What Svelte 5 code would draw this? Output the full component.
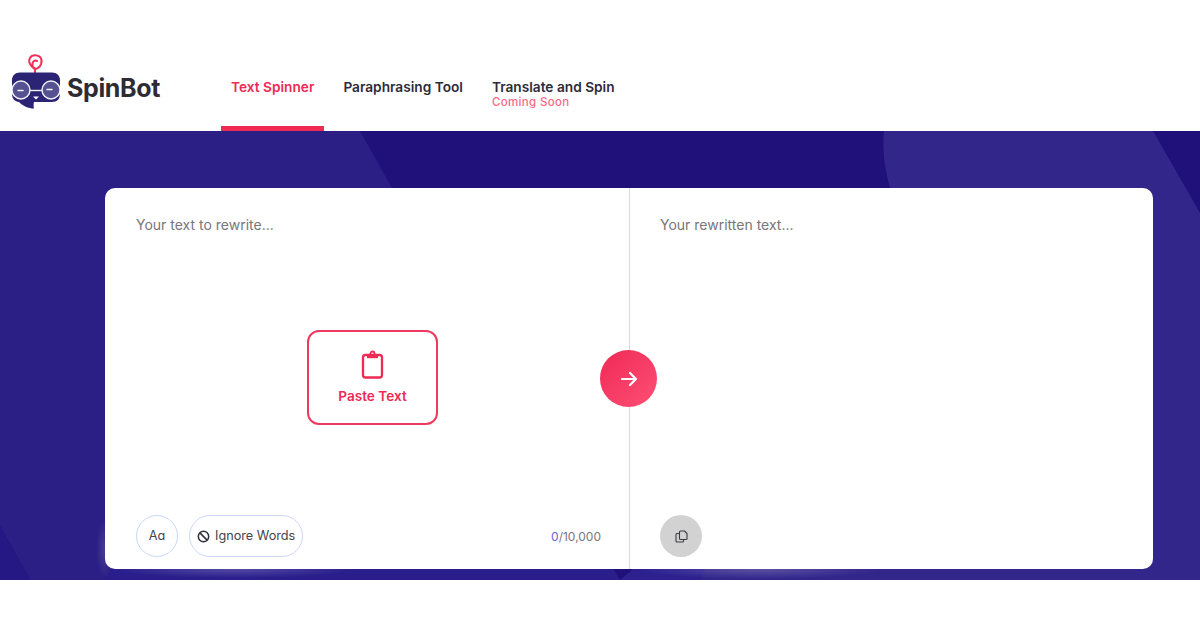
<script>
  const tabs = [
    { label: 'Text Spinner', active: true },
    { label: 'Paraphrasing Tool' },
    { label: 'Translate and Spin', note: 'Coming Soon' }
  ];
</script>

<header class="topbar">
  <a class="logo" href="#top">
    <svg class="logo-mark" width="48" height="55" viewBox="0 0 48 55" fill="none">
      <path d="M23 22 V15.5 C18 12 16 7 18 4 C20 0.5 26 0.5 28.5 3.5 C31 7 29 13 25 14.5 C22 15.5 20 12.5 20.5 9.5 C21 7 23 6 25 7" stroke="#f0325a" stroke-width="2" stroke-linecap="round"/>
      <path d="M8 18.5 H40 C45 18.5 48 22 48 26 V40 C48 45 45 48 40 48 H22 C21.5 50 21.5 52.5 22 54.5 C16 54.5 11 52 7 48 C3 47.5 0 45 0 40 V26 C0 22 3 18.5 8 18.5 Z" fill="#2b2374"/>
      <circle cx="9" cy="36" r="9" fill="#565191" stroke="#f2f2f8" stroke-width="1.4"/>
      <circle cx="39" cy="36" r="9" fill="#565191" stroke="#f2f2f8" stroke-width="1.4"/>
      <path d="M18 36.5 H30" stroke="#f2f2f8" stroke-width="1.4"/>
      <path d="M6 36.5 H11 M35 35.5 H40" stroke="#f2f2f8" stroke-width="1.5" stroke-linecap="round"/>
      <path d="M21 42.5 H27 L24 45.5 Z" fill="#fff"/>
    </svg>
    <span class="logo-text">SpinBot</span>
  </a>
  <nav class="tabs">
    {#each tabs as tab}
      <a class="tab" class:active={tab.active} href="#top">
        <span class="tab-label">{tab.label}</span>
        {#if tab.note}<span class="tab-note">{tab.note}</span>{/if}
      </a>
    {/each}
  </nav>
</header>

<main class="hero">
  <svg class="hero-bg" width="1200" height="449" viewBox="0 0 1200 449" preserveAspectRatio="none">
    <defs>
      <radialGradient id="glow">
        <stop offset="0" stop-color="#fff" stop-opacity="0.2"/>
        <stop offset="1" stop-color="#fff" stop-opacity="0"/>
      </radialGradient>
    </defs>
    <rect width="1200" height="449" fill="#201079"/>
    <path d="M0 0 H360 L392 57 L105 449 H30 L0 395 Z" fill="#2b1e85"/>
    <path d="M0 395 L30 449 H0 Z" fill="#251884"/>
    <path d="M105 449 L392 57 L620 449 Z" fill="#2a1e8c"/>
    <path d="M620 449 L840 260 L1200 200 V449 Z" fill="#2d2190"/>
    <path d="M884 0 H1153 L1200 82 V449 H700 L890 57 C885 38 882 20 884 0 Z" fill="#32268b"/>
    <ellipse cx="105" cy="418" rx="9" ry="30" fill="url(#glow)" opacity="0.7"/>
    <ellipse cx="235" cy="438" rx="120" ry="9" fill="url(#glow)"/>
    <ellipse cx="760" cy="438" rx="120" ry="10" fill="url(#glow)"/>
  </svg>

  <section class="card">
    <div class="pane pane-left">
      <p class="placeholder">Your text to rewrite...</p>
      <div class="pane-middle">
        <button class="paste">
          <svg width="23" height="29" viewBox="0 0 23 29" fill="none" stroke="#ee2a55" stroke-width="2.3" stroke-linejoin="round">
            <rect x="2" y="5" width="19" height="22.5" rx="2.5"/>
            <circle cx="11.5" cy="3.5" r="2" stroke-width="1.8"/>
            <path d="M6 6.5 H17" stroke-width="3.4"/>
          </svg>
          <span>Paste Text</span>
        </button>
      </div>
      <div class="pane-foot">
        <button class="chip round">Aɑ</button>
        <button class="chip">
          <svg class="chip-icon" width="13" height="13" viewBox="0 0 13 13" fill="none" stroke="#2f2f3a" stroke-width="1.5">
            <circle cx="6.5" cy="6.5" r="5.2"/>
            <path d="M2.9 2.9 L10.1 10.1"/>
          </svg>
          Ignore Words
        </button>
        <span class="count"><b>0</b>/10,000</span>
      </div>
    </div>
    <div class="pane pane-right">
      <p class="placeholder">Your rewritten text...</p>
      <div class="pane-foot">
        <button class="copy" aria-label="Copy">
          <svg width="13" height="13" viewBox="0 0 13 13" fill="none" stroke="#3a3a42" stroke-width="1.1" stroke-linejoin="round">
            <path d="M4.5 3.5 H2 A1 1 0 0 0 1 4.5 V11 A1 1 0 0 0 2 12 H7.5 A1 1 0 0 0 8.5 11 V9.5"/>
            <path d="M5.5 1 H9.5 L12 3.5 V8.5 A1 1 0 0 1 11 9.5 H5.5 A1 1 0 0 1 4.5 8.5 V2 A1 1 0 0 1 5.5 1 Z"/>
          </svg>
        </button>
      </div>
    </div>
    <button class="go" aria-label="Spin">
      <svg width="20" height="20" viewBox="0 0 20 20" fill="none" stroke="#fff" stroke-width="2.2" stroke-linecap="round" stroke-linejoin="round">
        <path d="M3 10 H17 M11 4 L17 10 L11 16"/>
      </svg>
    </button>
  </section>
</main>
<div class="foot-gap"></div>

<style>
  :global(body) {
    background: #fff;
    font-family: Inter, "Open Sans", sans-serif;
  }

  .topbar {
    height: 131px;
    box-sizing: border-box;
    display: flex;
    align-items: flex-end;
    padding-left: 12px;
  }

  .logo {
    display: flex;
    align-items: flex-start;
    gap: 7px;
    width: 209px;
    height: 77px;
    box-sizing: border-box;
    text-decoration: none;
  }

  .logo-text {
    font-size: 25px;
    font-weight: 700;
    color: #2e2b33;
    letter-spacing: -0.35px;
    margin-top: 19px;
  }

  .tabs {
    display: flex;
    gap: 9px;
  }

  .tab {
    height: 57px;
    box-sizing: border-box;
    padding: 5px 10px 0;
    border-bottom: 5px solid transparent;
    text-decoration: none;
    color: #2e2b3a;
    display: flex;
    flex-direction: column;
  }

  .tab.active {
    color: #ee2a55;
    border-bottom-color: #ee2a55;
  }

  .tab-label {
    font-size: 13.7px;
    font-weight: 600;
    line-height: 16px;
  }

  .tab-note {
    font-size: 11.5px;
    font-weight: 500;
    line-height: 13px;
    color: #fb6a86;
    letter-spacing: 0.35px;
    margin-top: 1px;
  }

  .hero {
    position: relative;
    height: 449px;
    box-sizing: border-box;
    padding: 57px 47px 11px 105px;
    overflow: hidden;
  }

  .hero-bg {
    position: absolute;
    inset: 0;
  }

  .card {
    position: relative;
    height: 381px;
    background: #fff;
    border-radius: 10px;
    display: grid;
    grid-template-columns: 525px 523px;
  }

  .pane {
    box-sizing: border-box;
    display: flex;
    flex-direction: column;
    padding: 28px 30px 12px;
  }

  .pane-left {
    border-right: 1px solid #d5d9e6;
    padding-left: 31px;
    padding-right: 28px;
  }

  .placeholder {
    margin: 0;
    font-size: 14px;
    line-height: 17px;
    color: #77767a;
  }

  .pane-middle {
    flex: 1;
    display: flex;
    justify-content: center;
    padding-top: 97px;
    padding-left: 8px;
  }

  .paste {
    width: 131px;
    height: 95px;
    box-sizing: border-box;
    border: 2px solid #ee3a60;
    border-radius: 12px;
    background: #fff;
    color: #ee2a55;
    font: 600 13.6px/16px Inter, sans-serif;
    display: flex;
    flex-direction: column;
    align-items: center;
    padding: 18px 0 0;
    gap: 9px;
  }

  .pane-foot {
    display: flex;
    align-items: center;
    gap: 11px;
    margin-top: auto;
  }

  .chip {
    height: 42px;
    box-sizing: border-box;
    border: 1px solid #ccd8f4;
    border-radius: 21px;
    background: #fff;
    color: #45444c;
    font: 400 12.7px/16px Inter, sans-serif;
    padding: 0 7px;
    width: 114px;
    display: flex;
    align-items: center;
    gap: 5px;
    white-space: nowrap;
  }

  .chip-icon {
    flex-shrink: 0;
  }

  .chip.round {
    width: 42px;
    justify-content: center;
    padding: 0;
  }

  .count {
    margin-left: auto;
    font-size: 12px;
    color: #77767f;
  }

  .count b {
    font-weight: 400;
    color: #6a63c9;
  }

  .copy {
    width: 42px;
    height: 42px;
    border: 0;
    border-radius: 50%;
    background: #d2d2d2;
    display: flex;
    align-items: center;
    justify-content: center;
    padding: 0;
  }

  .go {
    position: absolute;
    left: 495px;
    top: 162px;
    width: 57px;
    height: 57px;
    border: 0;
    border-radius: 50%;
    background: linear-gradient(135deg, #ee2a55, #ff4f75);
    display: flex;
    align-items: center;
    justify-content: center;
    padding: 0;
  }

  .foot-gap {
    height: 50px;
  }
</style>
